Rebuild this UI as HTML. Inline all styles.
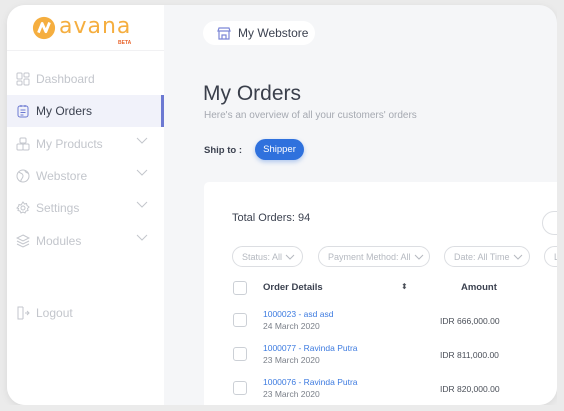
<!DOCTYPE html>
<html><head><meta charset="utf-8"><style>
*{margin:0;padding:0;box-sizing:border-box}
body{width:564px;height:411px;background:#ebebeb;font-family:"Liberation Sans",sans-serif;overflow:hidden;position:relative}
.card{position:absolute;left:7px;top:5px;width:550px;height:400px;border-radius:18px;overflow:hidden;background:#f5f6f8;box-shadow:0 2px 8px rgba(0,0,0,.08)}
.side{position:absolute;left:0;top:0;width:157px;height:400px;background:#fff}
.logo{position:absolute;left:0;top:0;width:157px;height:46px;border-bottom:1px solid #f1f1f3}
.nav{position:absolute;left:0;width:157px;height:32px;font-size:12px;color:#c3c6cc;display:flex;align-items:center;padding-left:9px}
.nav svg{margin-right:6px}
.nav .chev{position:absolute;right:10px;top:9px}
.active{background:#f1f2fa;color:#3c4250}
.active:after{content:"";position:absolute;right:0;top:0;width:3px;height:32px;background:#6c79d2}
.abs{position:absolute}
.pill{position:absolute;height:21px;border:1px solid #dcdee2;border-radius:11px;font-size:9px;color:#b5b9c0;display:flex;align-items:center;padding-left:9px;background:#fff;white-space:nowrap}
.pill svg{margin-left:3px}
.cb{position:absolute;left:233px;width:14px;height:14px;border:1px solid #ccd0d6;border-radius:3px;background:#fff}
.lnk{position:absolute;left:263px;font-size:8.5px;color:#3d7be0}
.dt{position:absolute;left:263px;font-size:8.5px;color:#7b8089}
.amt{position:absolute;left:440px;font-size:8.5px;color:#4a4f58}
</style></head><body>
<div class="card">
<div class="side">
<div class="logo">
<svg class="abs" style="left:25px;top:11px" width="24" height="24" viewBox="0 0 26 26"><circle cx="13" cy="13" r="12" fill="#f5ae3f"/><path d="M7 18 L11 8 L15 17 L19 7" stroke="#fff" stroke-width="3" fill="none" stroke-linejoin="round"/></svg>
<div class="abs" style="left:52px;top:9px;font-size:22px;color:#f5ae3f;letter-spacing:1px;line-height:26px;font-family:'DejaVu Sans',sans-serif">avana</div>
<div class="abs" style="left:111px;top:35px;font-size:5px;color:#e8632b;font-weight:bold">BETA</div>
</div>
<div class="nav" style="top:58px"><svg width="14" height="14" viewBox="0 0 14 14" fill="none" stroke="#c3c6cc"><rect x="1" y="1" width="5" height="6" rx="1"/><rect x="8" y="1" width="5" height="4" rx="1"/><rect x="1" y="9" width="5" height="4" rx="1"/><rect x="8" y="7" width="5" height="6" rx="1"/></svg>Dashboard</div>
<div class="nav active" style="top:90px"><svg width="14" height="14" viewBox="0 0 14 14" fill="none" stroke="#6c79d2"><rect x="2" y="2" width="10" height="11" rx="2"/><path d="M5 1v2M9 1v2M4.5 6h5M4.5 8.5h5M4.5 11h3"/></svg>My Orders</div>
<div class="nav" style="top:123px"><svg width="14" height="14" viewBox="0 0 14 14" fill="none" stroke="#c3c6cc"><rect x="4" y="1" width="6" height="5" rx="1"/><rect x="1" y="7" width="6" height="6" rx="1"/><rect x="7" y="7" width="6" height="6" rx="1"/></svg>My Products<svg class="chev" width="12" height="8"><path d="M1 1l5 5 5-5" stroke="#c3c6cc" fill="none"/></svg></div>
<div class="nav" style="top:155px"><svg width="14" height="14" viewBox="0 0 14 14" fill="none" stroke="#c3c6cc"><circle cx="7" cy="7" r="6"/><path d="M3 3c2 2 4 1 4 4s-3 3-2 6M9 1.5c0 2 2 2 3.5 3"/></svg>Webstore<svg class="chev" width="12" height="8"><path d="M1 1l5 5 5-5" stroke="#c3c6cc" fill="none"/></svg></div>
<div class="nav" style="top:187px"><svg width="14" height="14" viewBox="0 0 14 14" fill="none" stroke="#c3c6cc"><circle cx="7" cy="7" r="2"/><path d="M7 1l1.5 2 2-.5.5 2 2 1.5-1.5 1.5.5 2-2 .5-1 2-2-1-2 1-1-2-2-.5.5-2L1 7l1.5-1.5.5-2 2 .5z"/></svg>Settings<svg class="chev" width="12" height="8"><path d="M1 1l5 5 5-5" stroke="#c3c6cc" fill="none"/></svg></div>
<div class="nav" style="top:220px"><svg width="14" height="14" viewBox="0 0 14 14" fill="none" stroke="#c3c6cc"><path d="M7 1l6 3-6 3-6-3z M1 7l6 3 6-3 M1 10l6 3 6-3"/></svg>Modules<svg class="chev" width="12" height="8"><path d="M1 1l5 5 5-5" stroke="#c3c6cc" fill="none"/></svg></div>
<div class="nav" style="top:292px"><svg width="14" height="14" viewBox="0 0 14 14" fill="none" stroke="#c3c6cc"><path d="M7 1H2v12h5M7 1v12M9 7h4M11 5l2 2-2 2"/></svg>Logout</div>
</div>
<div class="abs" style="left:196px;top:16px;width:112px;height:24px;background:#fff;border-radius:12px"></div>
<svg class="abs" style="left:210px;top:21px" width="14" height="14" viewBox="0 0 14 14" fill="none" stroke="#7c86d6" stroke-width="1.2"><path d="M2 2h10l1 3H1z"/><path d="M2 5v8h10V5M5 13V9h4v4"/></svg>
<div class="abs" style="left:231px;top:21px;font-size:12px;color:#3c4250">My Webstore</div>
<div class="abs" style="left:196px;top:77px;font-size:21px;color:#3a3f4b">My Orders</div>
<div class="abs" style="left:197px;top:105px;font-size:10px;color:#a5a9b1">Here's an overview of all your customers' orders</div>
<div class="abs" style="left:197px;top:140px;font-size:9.5px;font-weight:bold;color:#3c4250">Ship to :</div>
<div class="abs" style="left:248px;top:134px;width:49px;height:21px;border-radius:11px;background:#2f71dd;color:#fff;font-size:9.5px;display:flex;align-items:center;justify-content:center;box-shadow:0 2px 5px rgba(47,113,221,.35)">Shipper</div>
<div class="abs" style="left:197px;top:177px;width:360px;height:230px;background:#fff;border-radius:5px"></div>
</div>
<div class="abs" style="left:232px;top:212px;font-size:11px;color:#3c4250">Total Orders: 94</div>
<div class="abs" style="left:542px;top:211px;width:30px;height:24px;border:1px solid #dcdee2;border-radius:12px"></div>
<div class="pill" style="left:232px;top:246px;width:71px">Status: All<svg width="10" height="6"><path d="M1 1l4 4 4-4" stroke="#b5b9c0" fill="none"/></svg></div>
<div class="pill" style="left:318px;top:246px;width:112px">Payment Method: All<svg width="10" height="6"><path d="M1 1l4 4 4-4" stroke="#b5b9c0" fill="none"/></svg></div>
<div class="pill" style="left:444px;top:246px;width:86px">Date: All Time<svg width="10" height="6"><path d="M1 1l4 4 4-4" stroke="#b5b9c0" fill="none"/></svg></div>
<div class="pill" style="left:544px;top:246px;width:30px">L</div>
<div class="cb" style="top:281px"></div>
<div class="abs" style="left:263px;top:282px;font-size:9.5px;font-weight:bold;color:#3c4250">Order Details</div>
<div class="abs" style="left:401px;top:282px;font-size:8px;color:#4a4f58">⬍</div>
<div class="abs" style="left:461px;top:282px;font-size:9.5px;font-weight:bold;color:#3c4250">Amount</div>
<div class="cb" style="top:313px"></div><div class="lnk" style="top:309px">1000023 - asd asd</div><div class="dt" style="top:321px">24 March 2020</div><div class="amt" style="top:316px">IDR 666,000.00</div>
<div class="cb" style="top:347px"></div><div class="lnk" style="top:343px">1000077 - Ravinda Putra</div><div class="dt" style="top:355px">23 March 2020</div><div class="amt" style="top:350px">IDR 811,000.00</div>
<div class="cb" style="top:381px"></div><div class="lnk" style="top:377px">1000076 - Ravinda Putra</div><div class="dt" style="top:389px">23 March 2020</div><div class="amt" style="top:384px">IDR 820,000.00</div>
<div class="abs" style="left:0;top:405px;width:564px;height:6px;background:#ebebeb"></div>
<div class="abs" style="left:557px;top:0;width:7px;height:411px;background:#ebebeb"></div>
</body></html>
